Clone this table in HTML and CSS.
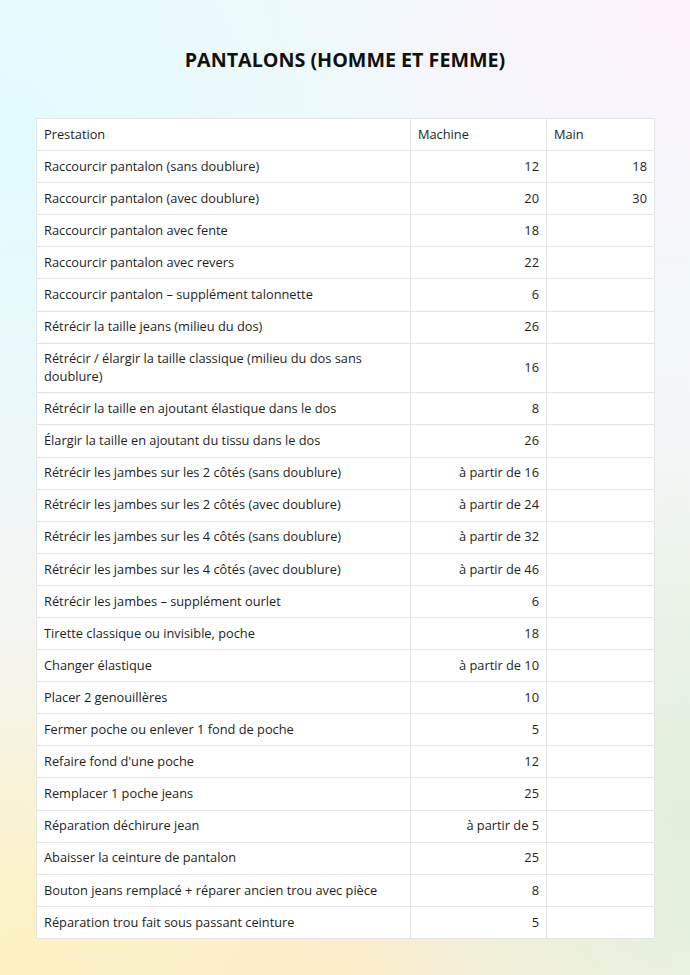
FILE: index.html
```html
<!DOCTYPE html>
<html lang="fr">
<head>
<meta charset="utf-8">
<title>Pantalons (homme et femme)</title>
<link rel="stylesheet" href="styles.css">
</head>
<body>
<main class="page">
  <h1 class="title">PANTALONS (HOMME ET FEMME)</h1>
  <table class="prices">
    <colgroup>
      <col class="c-name"><col class="c-mach"><col class="c-main">
    </colgroup>
    <thead>
      <tr><th>Prestation</th><th>Machine</th><th>Main</th></tr>
    </thead>
    <tbody>
      <tr><td>Raccourcir pantalon (sans doublure)</td><td class="num">12</td><td class="num">18</td></tr>
      <tr><td>Raccourcir pantalon (avec doublure)</td><td class="num">20</td><td class="num">30</td></tr>
      <tr><td>Raccourcir pantalon avec fente</td><td class="num">18</td><td></td></tr>
      <tr><td>Raccourcir pantalon avec revers</td><td class="num">22</td><td></td></tr>
      <tr><td>Raccourcir pantalon – supplément talonnette</td><td class="num">6</td><td></td></tr>
      <tr><td>Rétrécir la taille jeans (milieu du dos)</td><td class="num">26</td><td></td></tr>
      <tr><td>Rétrécir / élargir la taille classique (milieu du dos sans doublure)</td><td class="num">16</td><td></td></tr>
      <tr><td>Rétrécir la taille en ajoutant élastique dans le dos</td><td class="num">8</td><td></td></tr>
      <tr><td>Élargir la taille en ajoutant du tissu dans le dos</td><td class="num">26</td><td></td></tr>
      <tr><td>Rétrécir les jambes sur les 2 côtés (sans doublure)</td><td class="num">à partir de 16</td><td></td></tr>
      <tr><td>Rétrécir les jambes sur les 2 côtés (avec doublure)</td><td class="num">à partir de 24</td><td></td></tr>
      <tr><td>Rétrécir les jambes sur les 4 côtés (sans doublure)</td><td class="num">à partir de 32</td><td></td></tr>
      <tr><td>Rétrécir les jambes sur les 4 côtés (avec doublure)</td><td class="num">à partir de 46</td><td></td></tr>
      <tr><td>Rétrécir les jambes – supplément ourlet</td><td class="num">6</td><td></td></tr>
      <tr><td>Tirette classique ou invisible, poche</td><td class="num">18</td><td></td></tr>
      <tr><td>Changer élastique</td><td class="num">à partir de 10</td><td></td></tr>
      <tr><td>Placer 2 genouillères</td><td class="num">10</td><td></td></tr>
      <tr><td>Fermer poche ou enlever 1 fond de poche</td><td class="num">5</td><td></td></tr>
      <tr><td>Refaire fond d'une poche</td><td class="num">12</td><td></td></tr>
      <tr><td>Remplacer 1 poche jeans</td><td class="num">25</td><td></td></tr>
      <tr><td>Réparation déchirure jean</td><td class="num">à partir de 5</td><td></td></tr>
      <tr><td>Abaisser la ceinture de pantalon</td><td class="num">25</td><td></td></tr>
      <tr><td>Bouton jeans remplacé + réparer ancien trou avec pièce</td><td class="num">8</td><td></td></tr>
      <tr><td>Réparation trou fait sous passant ceinture</td><td class="num">5</td><td></td></tr>
    </tbody>
  </table>
</main>
</body>
</html>
```
FILE: styles.css
```css
html, body {
  margin: 0;
  padding: 0;
}
body {
  width: 690px;
  min-height: 975px;
  font-family: "Open Sans", "Liberation Sans", sans-serif;
  color: #1e1e1e;
  background-color: #f6f9f4;
  background-image:
    radial-gradient(ellipse 440px 440px at 0px 140px, #e2fbfd 0%, rgba(226,251,253,0) 100%),
    radial-gradient(ellipse 380px 300px at 690px 0px, #fdf2fc 0%, rgba(253,242,252,0) 100%),
    radial-gradient(ellipse 360px 380px at 690px 820px, #e0efdb 0%, rgba(224,239,219,0) 100%),
    radial-gradient(ellipse 440px 340px at 0px 975px, #fdf2c0 0%, rgba(253,242,192,0) 100%),
    radial-gradient(ellipse 380px 200px at 340px 975px, #fcebcb 0%, rgba(252,235,203,0) 100%),
    linear-gradient(180deg, #f1f9fb 0%, #f3f6f6 50%, #f6f4e6 100%);
}
.page {
  padding: 46px 36px 36px;
}
.title {
  margin: 0 0 45px;
  text-align: center;
  font-size: 19.7px;
  font-weight: 700;
  line-height: 27px;
  color: #111;
}
.prices {
  width: 618px;
  border-collapse: collapse;
  background: #fff;
  font-size: 12.8px;
  table-layout: fixed;
}
.c-name { width: 374px; }
.c-mach { width: 136px; }
.c-main { width: 108px; }
.prices th,
.prices td {
  border: 1px solid #e4e4e4;
  padding: 6.75px 7px;
  line-height: 17.6px;
  text-align: left;
  font-weight: 400;
  vertical-align: middle;
}
.prices td.num {
  text-align: right;
}
```
